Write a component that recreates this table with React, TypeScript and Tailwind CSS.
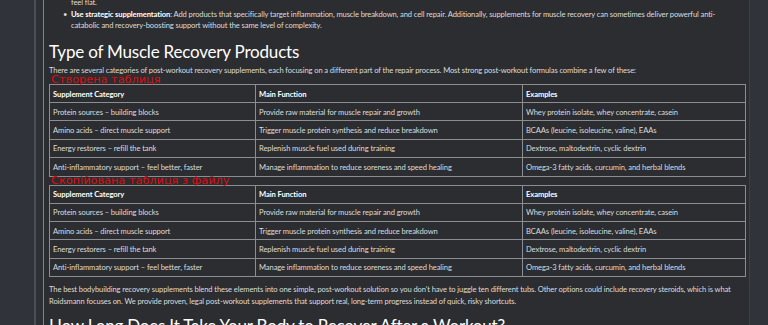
const rows = [
  ['Protein sources – building blocks', 'Provide raw material for muscle repair and growth', 'Whey protein isolate, whey concentrate, casein'],
  ['Amino acids – direct muscle support', 'Trigger muscle protein synthesis and reduce breakdown', 'BCAAs (leucine, isoleucine, valine), EAAs'],
  ['Energy restorers – refill the tank', 'Replenish muscle fuel used during training', 'Dextrose, maltodextrin, cyclic dextrin'],
  ['Anti-inflammatory support – feel better, faster', 'Manage inflammation to reduce soreness and speed healing', 'Omega-3 fatty acids, curcumin, and herbal blends'],
]

function RecoveryTable() {
  return (
    <table className="w-[696px] table-fixed border-collapse border border-[#8a8d91] text-[7.6px] leading-[10px] tracking-[-0.1px]">
      <colgroup>
        <col className="w-[206px]" />
        <col className="w-[267px]" />
        <col className="w-[223px]" />
      </colgroup>
      <thead>
        <tr className="h-[18px]">
          {['Supplement Category', 'Main Function', 'Examples'].map((h) => (
            <th key={h} className="border border-[#8a8d91] px-[3px] text-left font-bold text-white">
              {h}
            </th>
          ))}
        </tr>
      </thead>
      <tbody>
        {rows.map((r) => (
          <tr key={r[0]} className="h-[18.4px]">
            {r.map((c) => (
              <td key={c} className="border border-[#8a8d91] px-[3px] text-[#dcdcdc]">
                {c}
              </td>
            ))}
          </tr>
        ))}
      </tbody>
    </table>
  )
}

function Label({ children }: { children: string }) {
  return (
    <div className="relative z-10 h-[8px] pl-[2px] font-['DejaVu_Sans',sans-serif] text-[11.3px] leading-[8px] text-[#dc0e0e]">
      {children}
    </div>
  )
}

export default function App() {
  return (
    <div className="flex h-[325px] w-[768px] overflow-hidden bg-[#2b2d31] font-['Lato',sans-serif] text-[#dcdcdc]">
      <div className="w-[34px] shrink-0 bg-[#30343a]" />
      <div className="w-[2px] shrink-0 bg-[#4a4f56]" />
      <div className="w-[7px] shrink-0 bg-[#2d3035]" />
      <div className="w-[1px] shrink-0 bg-[#80848a]" />
      <main className="flex-1 overflow-hidden pl-[5px] pr-[4px]">
        <div className="mt-[-3px] text-[7.6px] leading-[11.5px] tracking-[-0.12px]">
          <ul className="pl-[22px] pr-[20px]">
            <li className="list-none">feel flat.</li>
            <li className="relative">
              <span className="absolute left-[-8px] top-[0px]">•</span>
              <b className="font-bold text-white">Use strategic supplementation</b>: Add products that specifically target inflammation, muscle breakdown, and cell repair. Additionally, supplements for muscle recovery can sometimes deliver powerful anti-catabolic and recovery-boosting support without the same level of complexity.
            </li>
          </ul>
        </div>
        <h2 className="mt-[9px] text-[17px] leading-[22px] font-normal tracking-[-0.2px] text-white">
          Type of Muscle Recovery Products
        </h2>
        <p className="mt-[2px] text-[7.6px] leading-[11.5px] tracking-[-0.12px]">
          There are several categories of post-workout recovery supplements, each focusing on a different part of the repair process. Most strong post-workout formulas combine a few of these:
        </p>
        <Label>Створена таблиця</Label>
        <RecoveryTable />
        <Label>Скопійована таблиця з файлу</Label>
        <RecoveryTable />
        <p className="mt-[6px] text-[7.6px] leading-[12px] tracking-[-0.12px]">
          The best bodybuilding recovery supplements blend these elements into one simple, post-workout solution so you don't have to juggle ten different tubs. Other options could include recovery steroids, which is what Roidsmann focuses on. We provide proven, legal post-workout supplements that support real, long-term progress instead of quick, risky shortcuts.
        </p>
        <h2 className="mt-[8px] text-[17px] leading-[22px] font-normal tracking-[-0.2px] text-white">
          How Long Does It Take Your Body to Recover After a Workout?
        </h2>
      </main>
      <div className="w-[1px] shrink-0 bg-[#3d4147]" />
      <div className="w-[18px] shrink-0 bg-[#30343a]" />
    </div>
  )
}
